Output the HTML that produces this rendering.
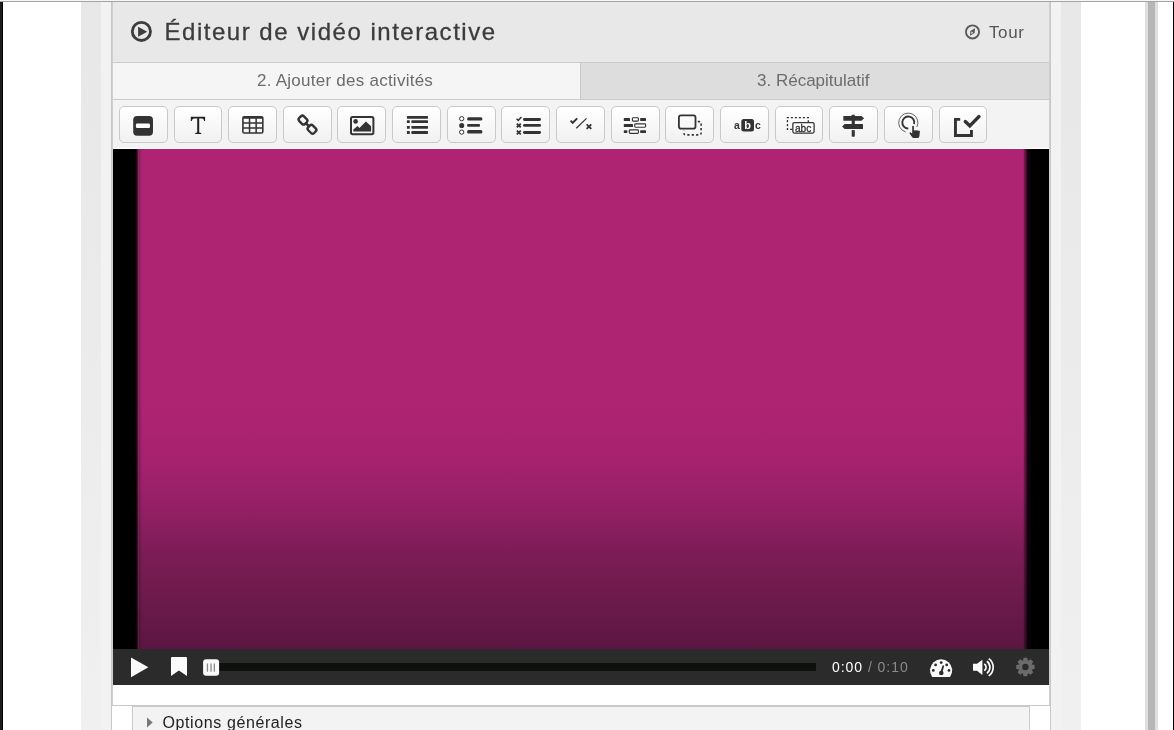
<!DOCTYPE html>
<html><head><meta charset="utf-8">
<style>
*{box-sizing:border-box}
body{will-change:transform}
html,body{margin:0;padding:0;width:1174px;height:730px;overflow:hidden;background:#fff;font-family:"Liberation Sans",sans-serif}
.a{position:absolute}
#topline0{left:0;top:0;width:1174px;height:1px;background:#f6f6f6}
#topline1{left:0;top:1px;width:1174px;height:1px;background:#a4a4a4}
#lblack{left:0;top:2px;width:3px;height:728px;background:linear-gradient(to right,#1c1c1c 0,#1c1c1c 2px,#030303 2px)}
#rblack{left:1173px;top:2px;width:1px;height:728px;background:#000}
#lband1{left:81px;top:2px;width:20px;height:728px;background:linear-gradient(#e7e7e7,#f0f0f0)}
#lband2{left:101px;top:2px;width:10px;height:728px;background:#f2f2f2}
#rband2{left:1051px;top:2px;width:10px;height:728px;background:#f2f2f2}
#rband1{left:1061px;top:2px;width:20px;height:728px;background:linear-gradient(#e7e7e7,#f0f0f0)}
#sb1{left:1145px;top:2px;width:13px;height:728px;background:#dfdfdf}
#sb2{left:1148px;top:2px;width:7px;height:728px;background:#b5b6b8}
#lborder{left:111px;top:2px;width:1px;height:728px;background:#c8c8c8}
#rborder{left:1050px;top:2px;width:1px;height:728px;background:#c8c8c8}
#header{left:112px;top:2px;width:938px;height:60px;background:#e8e8e8}
#hline{left:112px;top:62px;width:938px;height:1px;background:#cacaca}
#tab1{left:112px;top:63px;width:468px;height:36px;background:#f5f5f5}
#tabdiv{left:580px;top:63px;width:1px;height:36px;background:#cacaca}
#tab2{left:581px;top:63px;width:469px;height:36px;background:#dddddd}
#tline{left:112px;top:99px;width:938px;height:1px;background:#cacaca}
#toolbar{left:112px;top:100px;width:938px;height:48px;background:#f3f3f3}
#wline{left:113px;top:148px;width:936px;height:1px;background:#fff}
#video{left:113px;top:149px;width:936px;height:500px;background:#000}
#controls{left:113px;top:649px;width:936px;height:36px;background:#2b2b2b}
#below{left:113px;top:685px;width:936px;height:20px;background:#fff}
#bline{left:111px;top:705px;width:940px;height:1px;background:#c8c8c8}
#opts{left:132px;top:706px;width:898px;height:30px;background:#f3f3f3;border-left:1px solid #cacaca;border-right:1px solid #cacaca;border-top:1px solid #cacaca}
.title{left:164.5px;top:17px;font-size:24px;color:#3c3c3c;letter-spacing:1.52px;-webkit-text-stroke:.3px #3c3c3c;white-space:nowrap;line-height:30px}
.tour{left:989px;top:22px;font-size:17px;letter-spacing:.6px;color:#555;white-space:nowrap;line-height:22px}
.tabt{top:71px;font-size:17px;letter-spacing:.25px;color:#6c6c6c;white-space:nowrap;line-height:20px}
.btn{top:106px;width:49px;height:37px;border:1px solid #c9c9c9;border-radius:5px;background:linear-gradient(#fff,#f1f1f1)}
.btn svg{position:absolute;left:0;top:0}
#mag{left:22px;top:0;width:896px;height:500px;background:linear-gradient(to bottom,#ae2472 0px,#ae2472 255px,#a82270 302px,#962066 354px,#7c1c56 405px,#6a1a4a 456px,#5c1642 500px)}
#medgeL{left:22px;top:0;width:8px;height:500px;background:linear-gradient(to right,rgba(0,0,0,.97) 0px,rgba(0,0,0,.97) 1px,rgba(0,0,0,.8) 1px,rgba(0,0,0,.8) 2px,rgba(0,0,0,.58) 2px,rgba(0,0,0,.58) 3px,rgba(60,60,60,.4) 3px,rgba(60,60,60,.4) 4px,rgba(0,0,0,.2) 4px,rgba(0,0,0,.2) 5px,rgba(0,0,0,.1) 5px,rgba(0,0,0,0) 8px)}
#medgeR{left:910px;top:0;width:8px;height:500px;background:linear-gradient(to right,rgba(0,0,0,.08) 0px,rgba(0,0,0,.08) 1px,rgba(0,0,0,.32) 1px,rgba(0,0,0,.32) 2px,rgba(0,0,0,.48) 2px,rgba(0,0,0,.48) 3px,rgba(0,0,0,.65) 3px,rgba(0,0,0,.65) 4px,rgba(0,0,0,.84) 4px,rgba(0,0,0,.84) 5px,rgba(0,0,0,.92) 5px,rgba(0,0,0,.92) 8px)}
#ilL{left:112px;top:2px;width:1px;height:703px;background:#cfcfcf}
#ilR{left:1049px;top:2px;width:1px;height:703px;background:#cfcfcf}
</style></head><body>
<div class="a" id="topline0"></div>
<div class="a" id="topline1"></div>
<div class="a" id="lblack"></div>
<div class="a" id="rblack"></div>
<div class="a" id="lband1"></div>
<div class="a" id="lband2"></div>
<div class="a" id="rband1"></div>
<div class="a" id="rband2"></div>
<div class="a" id="sb1"></div>
<div class="a" id="sb2"></div>
<div class="a" id="lborder"></div>
<div class="a" id="rborder"></div>
<div class="a" id="header"></div>
<div class="a" id="hline"></div>
<div class="a" id="tab1"></div>
<div class="a" id="tabdiv"></div>
<div class="a" id="tab2"></div>
<div class="a" id="tline"></div>
<div class="a" id="toolbar"></div>
<div class="a" id="wline"></div>
<div class="a" id="video"><div class="a" id="mag"></div><div class="a" id="medgeL"></div><div class="a" id="medgeR"></div></div>
<div class="a" id="controls"></div>
<div class="a" id="below"></div>
<div class="a" id="ilL"></div><div class="a" id="ilR"></div><div class="a" id="bline"></div>
<div class="a" id="opts"></div>

<svg class="a" style="left:113px;top:649px" width="936" height="36" viewBox="113 649 936 36">
<path d="M131,657.5 L148.4,667.3 L131,677.2 Z" fill="#fafafa"/>
<path d="M172,657.1 L186,657.1 Q187,657.1 187,658.1 L187,676 L178.9,670.6 L171,676 L171,658.1 Q171,657.1 172,657.1 Z" fill="#fafafa"/>
<rect x="219" y="663" width="597" height="8" fill="#0e100e"/>
<rect x="203.1" y="659.2" width="16" height="16.6" rx="3" fill="#fafafa"/>
<rect x="206.8" y="663.5" width="1.3" height="8.2" fill="#8a8a8a"/>
<rect x="210.4" y="663.5" width="1.3" height="8.2" fill="#8a8a8a"/>
<rect x="213.7" y="663.5" width="1.3" height="8.2" fill="#8a8a8a"/>
<path fill="#fafafa" fill-rule="evenodd" d="M932.2,677 A11.1,11.1 0 1 1 950,677 Z"/>
<circle cx="941.2" cy="662.6" r="1.4" fill="#2b2b2b"/>
<circle cx="935.6" cy="664.9" r="1.4" fill="#2b2b2b"/>
<circle cx="946.7" cy="664.9" r="1.4" fill="#2b2b2b"/>
<circle cx="933.3" cy="670.4" r="1.4" fill="#2b2b2b"/>
<circle cx="949" cy="670.4" r="1.4" fill="#2b2b2b"/>
<path fill="#2b2b2b" d="M942.6,665.3 L944.2,665.8 L942.5,672 L940.6,671.6 Z"/>
<circle cx="941.3" cy="673" r="2.3" fill="#2b2b2b"/>
<path fill="#fafafa" d="M973,663.8 L977,663.8 L982.4,659.7 L982.4,675 L977,670.7 L973,670.7 Z"/>
<path fill="none" stroke="#fafafa" stroke-width="1.7" d="M984.19,664.12 A3.6,3.6 0 0 1 984.19,670.48"/>
<path fill="none" stroke="#fafafa" stroke-width="1.7" d="M986.88,661.27 A7.45,7.45 0 0 1 986.88,673.33"/>
<path fill="none" stroke="#fafafa" stroke-width="1.7" d="M988.76,658.68 A10.65,10.65 0 0 1 988.76,675.92"/>
<path fill="#6b6b6b" fill-rule="evenodd" d="M1022.96,660.65 L1023.51,657.79 L1027.29,657.79 L1027.84,660.65 L1028.16,660.78 L1030.58,659.15 L1033.25,661.82 L1031.62,664.24 L1031.75,664.56 L1034.61,665.11 L1034.61,668.89 L1031.75,669.44 L1031.62,669.76 L1033.25,672.18 L1030.58,674.85 L1028.16,673.22 L1027.84,673.35 L1027.29,676.21 L1023.51,676.21 L1022.96,673.35 L1022.64,673.22 L1020.22,674.85 L1017.55,672.18 L1019.18,669.76 L1019.05,669.44 L1016.19,668.89 L1016.19,665.11 L1019.05,664.56 L1019.18,664.24 L1017.55,661.82 L1020.22,659.15 L1022.64,660.78 Z M1028.60,667.0 A3.2,3.2 0 1 0 1022.20,667.0 A3.2,3.2 0 1 0 1028.60,667.0 Z"/>
</svg>
<div class="a" style="left:832px;top:659px;font-size:14px;line-height:17px;letter-spacing:.95px;color:#fff;white-space:nowrap">0:00 <span style="color:#8a8a8a">/ 0:10</span></div>
<div class="a btn" style="left:119px;width:49px"></div>
<div class="a btn" style="left:174px;width:48px"></div>
<div class="a btn" style="left:228px;width:49px"></div>
<div class="a btn" style="left:283px;width:49px"></div>
<div class="a btn" style="left:337px;width:49px"></div>
<div class="a btn" style="left:392px;width:49px"></div>
<div class="a btn" style="left:447px;width:49px"></div>
<div class="a btn" style="left:501px;width:49px"></div>
<div class="a btn" style="left:556px;width:49px"></div>
<div class="a btn" style="left:611px;width:49px"></div>
<div class="a btn" style="left:665px;width:49px"></div>
<div class="a btn" style="left:720px;width:49px"></div>
<div class="a btn" style="left:775px;width:48px"></div>
<div class="a btn" style="left:829px;width:49px"></div>
<div class="a btn" style="left:884px;width:49px"></div>
<div class="a btn" style="left:939px;width:48px"></div>
<svg class="a" style="left:112px;top:100px" width="938" height="48" viewBox="112 100 938 48">
<g fill="#333">
<!-- 1 -->
<rect x="133.2" y="115.9" width="19.8" height="19.85" rx="4"/>
<rect x="135.9" y="123.6" width="14.1" height="4.4" rx="1.2" fill="#fff"/>
<!-- 2 T -->
<path fill="#222" d="M190.8,116.8 L205.1,116.8 L205.1,121 L204.1,121 Q203.8,118.6 202.2,118.4 L199.2,118.4 L199.2,132.6 L201.2,132.9 L201.2,134.1 L195.2,134.1 L195.2,132.9 L197.2,132.6 L197.2,118.4 L193.8,118.4 Q192.2,118.6 191.8,121 L190.8,121 Z"/>
<!-- 3 table -->
<path fill-rule="evenodd" d="M244.1,116 h17.5 a2,2 0 0 1 2,2 v13.7 a2,2 0 0 1 -2,2 h-17.5 a2,2 0 0 1 -2,-2 v-13.7 a2,2 0 0 1 2,-2 Z
M243.7,118.8 v3.5 h5.1 v-3.5 Z M250.3,118.8 v3.5 h5.1 v-3.5 Z M256.9,118.8 v3.5 h5.1 v-3.5 Z
M243.7,123.8 v3.5 h5.1 v-3.5 Z M250.3,123.8 v3.5 h5.1 v-3.5 Z M256.9,123.8 v3.5 h5.1 v-3.5 Z
M243.7,128.8 v3.5 h5.1 v-3.5 Z M250.3,128.8 v3.5 h5.1 v-3.5 Z M256.9,128.8 v3.5 h5.1 v-3.5 Z"/>
<!-- 4 link -->
<g fill="none" stroke="#333" stroke-width="2.4">
<rect x="-4.15" y="-3.3" width="8.3" height="6.6" rx="2.2" transform="translate(303,120.1) rotate(45)"/>
<rect x="-4.15" y="-3.3" width="8.3" height="6.6" rx="2.2" transform="translate(312,129.3) rotate(45)"/>
<path d="M305.4,122.6 L309.6,126.8" stroke-width="2.6"/>
</g>
<!-- 5 image -->
<rect x="351" y="116.9" width="22.4" height="17.3" rx="1.6" fill="none" stroke="#333" stroke-width="2"/>
<circle cx="355.6" cy="121.4" r="2.3"/>
<path d="M353.3,131.4 L353.3,129.6 L357.5,126 L359.4,128 L365.9,121.4 L371.1,126.3 L371.1,131.4 Z"/>
<!-- 6 list -->
<rect x="406.9" y="116.05" width="21.1" height="2.65" rx=".6"/>
<rect x="406.9" y="120.3" width="2.9" height="2.7" rx=".5"/><rect x="411.35" y="120.3" width="16.65" height="2.7" rx=".6"/>
<rect x="406.9" y="126" width="2.9" height="2.7" rx=".5"/><rect x="411.35" y="126" width="16.65" height="2.7" rx=".6"/>
<rect x="406.9" y="131.1" width="2.9" height="2.8" rx=".5"/><rect x="411.35" y="131.1" width="16.65" height="2.8" rx=".6"/>
<!-- 7 radio list -->
<circle cx="461.7" cy="118.7" r="2.15" fill="#fff" stroke="#333" stroke-width="1"/>
<circle cx="461.7" cy="125.5" r="2.55"/>
<circle cx="461.7" cy="132.1" r="2.15" fill="#fff" stroke="#333" stroke-width="1"/>
<rect x="467.1" y="117.2" width="15.3" height="3.4" rx="1.5"/>
<rect x="467.1" y="124.1" width="12.9" height="2.7" rx="1"/>
<rect x="467.1" y="130.1" width="15.3" height="3.4" rx="1.5"/>
<!-- 8 checklist -->
<path d="M516.6,118.8 L518.3,120.4 L521.4,117.0" fill="none" stroke="#333" stroke-width="1.5"/>
<path d="M516.8,123.7 L520.8,127.2 M520.8,123.7 L516.8,127.2 M516.8,130.6 L520.8,134.3 M520.8,130.6 L516.8,134.3" fill="none" stroke="#333" stroke-width="1.8"/>
<rect x="523" y="118" width="18" height="2.9" rx="1.4"/>
<rect x="523" y="124" width="18" height="2.8" rx="1.4"/>
<rect x="523" y="130.9" width="18" height="3" rx="1.4"/>
<!-- 9 true false -->
<path d="M570.6,120.6 L572.7,122.8 L577.2,118.4" fill="none" stroke="#333" stroke-width="1.9"/>
<path d="M576.3,128.3 L586.5,118.4" fill="none" stroke="#333" stroke-width="1.2"/>
<path d="M586.6,124.3 L591.3,128.9 M591.3,124.3 L586.6,128.9" fill="none" stroke="#333" stroke-width="1.8"/>
<!-- 10 fill blanks -->
<rect x="623.8" y="118" width="6.2" height="3" rx=".5"/>
<rect x="632.4" y="117.7" width="6" height="3.4" rx="0.9" fill="#fff" stroke="#333" stroke-width="1.15"/>
<rect x="640.2" y="118" width="5.8" height="3" rx=".5"/>
<rect x="623.8" y="124.1" width="9.2" height="2.8" rx=".5"/>
<rect x="634.7" y="123.8" width="10.9" height="3.4" rx="0.9" fill="#fff" stroke="#333" stroke-width="1.15"/>
<rect x="623.8" y="130.2" width="3.5" height="2.9" rx=".5"/>
<rect x="629.3" y="129.8" width="9.1" height="3.5" rx="0.9" fill="#fff" stroke="#333" stroke-width="1.15"/>
<rect x="640.2" y="130.2" width="5.8" height="2.9" rx=".5"/>
<!-- 11 drag -->
<rect x="678.9" y="115.4" width="16.6" height="13.2" rx="2.2" fill="none" stroke="#333" stroke-width="1.8"/>
<path d="M697.8,121.6 H699 Q701.1,121.6 701.1,123.7 V132.7 Q701.1,134.9 699,134.9 H686 Q683.9,134.9 683.9,132.8 V130.6" fill="none" stroke="#333" stroke-width="1.6" stroke-dasharray="2.2 2.2"/>
<!-- 12 abc -->
<text x="736.8" y="129.2" text-anchor="middle" font-family="Liberation Sans" font-weight="bold" font-size="10.5">a</text>
<rect x="741.3" y="119.1" width="12.7" height="12.3" rx="2.5"/>
<text x="747.6" y="129.2" text-anchor="middle" font-family="Liberation Sans" font-weight="bold" font-size="11" fill="#fff">b</text>
<text x="758" y="129.2" text-anchor="middle" font-family="Liberation Sans" font-weight="bold" font-size="10.5">c</text>
<!-- 13 drag text -->
<path d="M792.2,129.45 L787.45,129.45 L787.45,117.6 L808.3,117.6 L808.3,122.5" fill="none" stroke="#333" stroke-width="1.3" stroke-dasharray="2.1 1.9"/>
<rect x="792.85" y="122.55" width="21.25" height="10.5" rx="1.5" fill="#fff" stroke="#333" stroke-width="1.3"/>
<text x="794.9" y="131.6" font-family="Liberation Sans" font-size="11.5" textLength="16.4" lengthAdjust="spacingAndGlyphs" stroke="#333" stroke-width=".35">abc</text>
<!-- 14 signpost -->
<rect x="851.7" y="114.5" width="3.1" height="22.3" rx=".8"/>
<path d="M843.8,116 L861.5,116 L864.1,118.3 L861.5,120.65 L843.8,120.65 Q843.3,120.65 843.3,120.1 L843.3,116.5 Q843.3,116 843.8,116 Z"/>
<rect x="851" y="128.9" width="4.5" height="1.2" fill="#fafafa"/>
<rect x="851" y="113.9" width="4.5" height="0.6" fill="#fafafa"/>
<path d="M844.6,124.1 L862.5,124.1 Q863,124.1 863,124.6 L863,128.4 Q863,128.9 862.5,128.9 L844.6,128.9 L842.1,126.5 Z"/>
<!-- 15 hotspot -->
<path d="M916.87,127 A9.6,9.6 0 1 0 905.65,131.93" fill="none" stroke="#555" stroke-width="0.9"/>
<path d="M914.1,124.05 A6,6 0 1 0 908.3,128.5" fill="none" stroke="#333" stroke-width="1.9"/>
<path d="M912.2,126.6 Q912.2,125.8 913.05,125.8 Q913.9,125.8 913.9,126.6 L913.9,130.4 L915.5,130.2 L917.4,130.4 L919.4,130.8 Q919.9,131 919.9,131.6 L919.4,136 Q919.2,138 917.8,138 L913.5,138 Q912.7,138 912.2,137.3 L909.6,133.6 Q909.1,132.8 909.8,132.4 Q910.5,132.1 911.2,132.7 L912.2,133.6 Z"/>
<!-- 16 submit -->
<path d="M954,118.1 L960.2,118.1 L960.2,120.7 L956.9,120.7 L956.9,134.1 L970,134.1 L970,129.9 L972.9,129.9 L972.9,136.9 L954,136.9 Z"/>
<path d="M965.3,121.6 L969.8,125.9 L978.9,116.6" fill="none" stroke="#333" stroke-width="3.5" stroke-linecap="round" stroke-linejoin="miter"/>
</g>
</svg>
<svg class="a" style="left:112px;top:2px" width="938" height="60" viewBox="112 2 938 60">
<circle cx="141.4" cy="31.4" r="9.1" fill="none" stroke="#3d3d3d" stroke-width="2.8"/>
<path d="M138.1,26.7 L147.2,31.7 L138.1,36.7 Z" fill="#3d3d3d"/>
<circle cx="972.5" cy="31.9" r="6.55" fill="none" stroke="#5a5a5a" stroke-width="1.9"/>
<path d="M975,28.3 L974.7,33.1 L970,35.7 L970.3,30.9 Z M971.3,31.6 L971.3,34 L973.3,32.7 Z" fill="#5a5a5a" fill-rule="evenodd"/>
</svg>
<div class="a" style="left:162.5px;top:713px;font-size:16px;line-height:20px;letter-spacing:.6px;color:#222;white-space:nowrap">Options générales</div>
<svg class="a" style="left:140px;top:710px" width="20" height="20" viewBox="140 710 20 20"><path d="M147,717.5 L152.7,722.5 L147,727.6 Z" fill="#777"/></svg>
<div class="a title">Éditeur de vidéo interactive</div>
<div class="a tour">Tour</div>
<div class="a tabt" style="left:257px">2. Ajouter des activités</div>
<div class="a tabt" style="left:757px;letter-spacing:0">3. Récapitulatif</div>

</body></html>
